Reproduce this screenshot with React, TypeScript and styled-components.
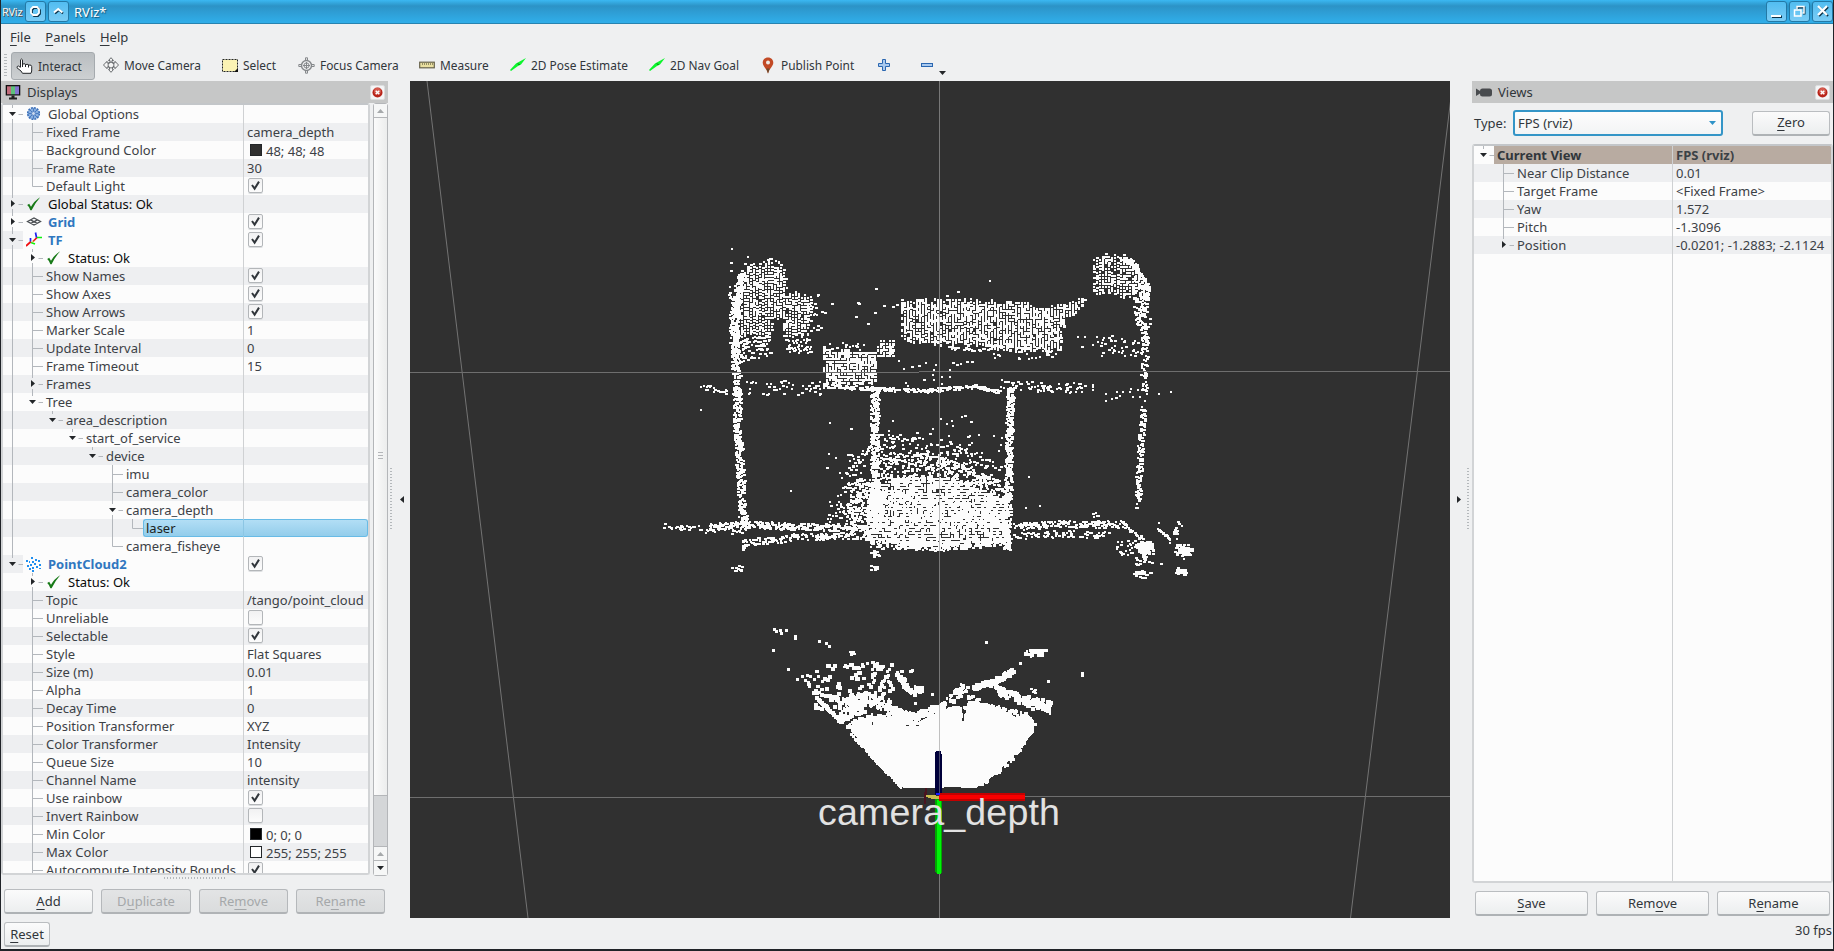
import React from "react";
import styled, { createGlobalStyle, css } from "styled-components";

const Global = createGlobalStyle`
  html, body { margin: 0; padding: 0; overflow: hidden; background: #202328; }
  body { font-family: "Noto Sans", sans-serif; font-size: 13px; color: #31363b; }
  * { box-sizing: border-box; }
  svg { display: block; flex: none; }
`;

/* ---------- window frame ---------- */
const Window = styled.div`
  width: 1834px;
  height: 951px;
  display: flex;
  flex-direction: column;
  padding: 0 1px 2px 1px;
  background: #202328;
`;
const TitleBar = styled.header`
  height: 24px;
  flex: none;
  display: flex;
  align-items: center;
  gap: 2px;
  padding: 0 0 1px 1px;
  background: linear-gradient(#3bb8f2 0, #2c93c6 6px, #2e9dd4 12px, #30ade8 22px);
  border-bottom: 1px solid #2783b0;
  color: #fff;
  text-shadow: 1px 1px 1px #145274;
`;
const AppIcon = styled.span`
  width: 21px;
  font: 400 11px "Noto Sans", sans-serif;
  letter-spacing: -0.3px;
  color: #f2f2f2;
  text-shadow: 1px 1px 0 #555;
`;
const TitleButton = styled.span`
  width: 21px;
  height: 21px;
  display: flex;
  align-items: center;
  justify-content: center;
  border: 1px solid #2379a6;
  border-radius: 3px;
  background: linear-gradient(#52bdf1, #7accf5);
`;
const TitleText = styled.span`
  flex: 1;
  padding: 1px 0 0 3px;
  line-height: 22px;
`;
const Body = styled.div`
  flex: 1;
  min-height: 0;
  display: flex;
  flex-direction: column;
  background: #eff0f1;
`;
const MenuBar = styled.nav`
  height: 27px;
  flex: none;
  display: flex;
  gap: 14.5px;
  padding: 4px 9px 0;
  line-height: 18px;
`;
const ToolBar = styled.div`
  height: 30px;
  flex: none;
  display: flex;
  align-items: center;
  padding: 0 0 2px 3px;
  font-size: 11.9px;
`;
const Grip = styled.i<{ $w: number; $h: number; $row?: boolean }>`
  width: ${(p) => p.$w}px;
  height: ${(p) => p.$h}px;
  flex: none;
  background: ${(p) =>
    p.$row
      ? "repeating-linear-gradient(90deg, #b4b8bb 0 1px, transparent 1px 3px)"
      : "repeating-linear-gradient(#b4b8bb 0 1px, transparent 1px 3px)"};
`;
const Tool = styled.button<{ $w: number; $active?: boolean }>`
  width: ${(p) => p.$w}px;
  height: 28px;
  display: flex;
  align-items: center;
  gap: 5px;
  padding: 0 5px;
  border: 1px solid transparent;
  border-radius: 3px;
  background: none;
  font: inherit;
  color: inherit;
  white-space: nowrap;
  ${(p) =>
    p.$active &&
    css`
      margin: 1px 2px 0 4px;
      padding: 1px 4px 0;
      border-color: #a5aaae;
      background: linear-gradient(#b9bdc0, #cdd0d2);
    `}
`;
const Workspace = styled.main`
  flex: 1;
  min-height: 0;
  display: flex;
`;
const LeftDock = styled.section`
  width: 387px;
  display: flex;
  flex-direction: column;
`;
const RightDock = styled.section`
  width: 361px;
  display: flex;
  flex-direction: column;
`;
const DockTitle = styled.div`
  height: 22px;
  flex: none;
  display: flex;
  align-items: center;
  gap: 6px;
  padding: 0 3px 0 4px;
  background: #c6c7c7;
  line-height: 22px;
`;
const DockName = styled.span`
  flex: 1;
`;
const CloseBox = styled.span`
  width: 15px;
  height: 15px;
  display: flex;
  align-items: center;
  justify-content: center;
  border-radius: 2px;
  background: #f4f5f6;
  border: 1px solid #dcdedf;
`;
const Splitter = styled.div<{ $flip?: boolean }>`
  width: 22px;
  flex: none;
  display: flex;
  flex-direction: ${(p) => (p.$flip ? "row-reverse" : "row")};
  align-items: center;
  gap: ${(p) => (p.$flip ? "6px" : "8px")};
  padding: 0 ${(p) => (p.$flip ? "3px" : "2px")} 2px;
  justify-content: flex-start;
`;
const Viewport = styled.div`
  width: 1040px;
  height: 837px;
  flex: none;
  background: #303030;
`;

/* ---------- property tree ---------- */
const TreeArea = styled.div`
  height: 773px;
  flex: none;
  display: flex;
  gap: 3px;
`;
const TreeFrame = styled.div<{ $w: number; $h: number; $col: number }>`
  width: ${(p) => p.$w}px;
  height: ${(p) => p.$h}px;
  flex: none;
  overflow: hidden;
  border: 2px solid #d2d4d6;
  border-top: 2px solid #c3c6c9;
  border-radius: 3px;
  background: linear-gradient(#cfd1d3, #cfd1d3) ${(p) => p.$col}px 0 / 1px 100% no-repeat #fcfcfc;
`;
const TreeRow = styled.div<{ $bg: string }>`
  height: 18px;
  display: flex;
  background: ${(p) => p.$bg};
`;
const Name = styled.div<{ $w: number; $bg?: string; $tone?: string; $bold?: boolean; $picked?: boolean }>`
  width: ${(p) => p.$w}px;
  flex: none;
  display: flex;
  align-items: center;
  gap: 6px;
  padding-left: 3px;
  line-height: 18px;
  white-space: nowrap;
  border-right: 1px solid #cfd1d3;
  color: ${(p) => p.$tone ?? "#3c4146"};
  font-weight: ${(p) => (p.$bold ? 700 : 400)};
  background: ${(p) => p.$bg ?? "none"};
  ${(p) =>
    p.$picked &&
    css`
      padding-left: 2px;
      border: 1px solid #68bbe6;
      border-right: 1px solid #8cc6e4;
      border-radius: 3px 0 0 3px;
      background: linear-gradient(#b2def5, #93cdeb);
      color: #1b1e20;
      line-height: 16px;
    `}
`;
const Value = styled.div<{ $bg?: string; $bold?: boolean; $picked?: boolean }>`
  flex: 1;
  display: flex;
  align-items: center;
  gap: 4px;
  padding-left: 3px;
  line-height: 18px;
  white-space: nowrap;
  color: #3c4146;
  font-weight: ${(p) => (p.$bold ? 700 : 400)};
  background: ${(p) => p.$bg ?? "none"};
  ${(p) =>
    p.$picked &&
    css`
      border: 1px solid #68bbe6;
      border-left: 0;
      border-radius: 0 3px 3px 0;
      background: linear-gradient(#b2def5, #93cdeb);
    `}
`;
const Check = styled.span`
  width: 15px;
  height: 15px;
  margin: 0 0 1px 1px;
  display: flex;
  align-items: center;
  justify-content: center;
  border: 1px solid #b3b6b9;
  border-radius: 2px;
  background: linear-gradient(#f1f1f2, #fcfcfc);
  box-shadow: 0 1px 0 #dcdee0;
`;
const Swatch = styled.span<{ $c: string }>`
  width: 12px;
  height: 12px;
  margin-left: 3px;
  border: 1px solid #232629;
  background: ${(p) => p.$c};
`;
const SwatchText = styled.span`
  padding-top: 1px;
`;
const ScrollBar = styled.div`
  width: 15px;
  display: flex;
  flex-direction: column;
  border: 1px solid #b4b6b9;
  border-radius: 3px;
  background: #d4d6d8;
`;
const ScrollButton = styled.span`
  height: 14px;
  display: flex;
  align-items: center;
  justify-content: center;
  background: #f6f7f7;
  border-bottom: 1px solid #b4b6b9;
  &:last-child { border-bottom: 0; }
`;
const Thumb = styled.span`
  height: 678px;
  display: flex;
  align-items: center;
  justify-content: center;
  background: linear-gradient(90deg, #fbfbfb, #eceded);
  border-bottom: 1px solid #b4b6b9;
  padding-bottom: 2px;
`;
const Groove = styled.span`
  flex: 1;
  border-bottom: 1px solid #b4b6b9;
`;

/* ---------- buttons ---------- */
const ButtonRow = styled.div`
  display: flex;
  flex: none;
  gap: 8px;
  padding: 8px 0 0 3px;
`;
const PushButton = styled.button<{ $w: number; $off?: boolean }>`
  width: ${(p) => p.$w}px;
  height: 25px;
  flex: none;
  padding: 0 0 1px;
  border: 1px solid ${(p) => (p.$off ? "#b5b8bb" : "#babdc0")};
  border-bottom: 2px solid ${(p) => (p.$off ? "#b0b3b6" : "#aeb2b5")};
  border-radius: 3px;
  background: ${(p) => (p.$off ? "linear-gradient(#e3e4e5, #dadcdd)" : "linear-gradient(#fbfbfb, #eceeef)")};
  font: 13px "Noto Sans", sans-serif;
  line-height: 20px;
  color: ${(p) => (p.$off ? "#a5a8aa" : "#31363b")};
`;
const SplitHandle = styled.div`
  height: 5px;
  display: flex;
  justify-content: center;
  padding-top: 1px;
`;
const StatusBar = styled.footer`
  height: 31px;
  flex: none;
  display: flex;
  justify-content: space-between;
  padding: 4px 1px 0 3px;
`;
const Fps = styled.span`
  line-height: 16px;
`;
const TypeRow = styled.div`
  height: 41px;
  flex: none;
  display: flex;
  align-items: center;
  padding: 0 3px 1px 2px;
`;
const TypeLabel = styled.span`
  width: 39px;
`;
const Combo = styled.div`
  width: 210px;
  height: 26px;
  margin-right: 29px;
  display: flex;
  align-items: center;
  justify-content: space-between;
  padding: 0 5px 0 3px;
  border: 2px solid #3495c7;
  border-radius: 3px;
  background: linear-gradient(#fdfdfd, #f3f4f5);
`;

/* Text with its keyboard mnemonic marked by "&" */
const Mnemonic = styled.u`
  text-underline-offset: 3px;
  text-decoration-thickness: 1px;
`;
function Label({ text }: { text: string }) {
  const at = text.indexOf("&");
  if (at < 0) return <span>{text}</span>;
  return (
    <span>
      {text.slice(0, at)}
      <Mnemonic>{text[at + 1]}</Mnemonic>
      {text.slice(at + 2)}
    </span>
  );
}

const Triangle = ({ dir, c = "#232629", s = 7 }: { dir: "up" | "down" | "left" | "right"; c?: string; s?: number }) => {
  const h = 4;
  const d = {
    up: `M0 ${h}L${s / 2} 0L${s} ${h}Z`,
    down: `M0 0H${s}L${s / 2} ${h}Z`,
    left: `M${h} 0V${s}L0 ${s / 2}Z`,
    right: `M0 0L${h} ${s / 2}L0 ${s}Z`,
  }[dir];
  const flat = dir === "up" || dir === "down";
  return (
    <svg width={flat ? s : h} height={flat ? h : s}>
      <path d={d} fill={c} />
    </svg>
  );
};
const SplitArrow = styled.span`
  padding-top: 2px;
`;

const CloseGlyph = () => (
  <svg width="11" height="11" viewBox="0 0 11 11">
    <circle cx="5.5" cy="5.5" r="5" fill="#b8241a" />
    <circle cx="5.5" cy="4.2" r="3.4" fill="#e4786a" opacity=".65" />
    <path d="M3.7 3.7L7.3 7.3M7.3 3.7L3.7 7.3" stroke="#fff" strokeWidth="1.4" />
  </svg>
);

/* ---------- tree icons ---------- */
const icons: Record<string, React.ReactNode> = {
  gear: (
    <svg width="16" height="16" viewBox="0 0 16 16">
      <circle cx="7.5" cy="7.5" r="5.8" fill="#87aee0" stroke="#3b6fb8" strokeWidth="1.6" strokeDasharray="2 1" />
      <g stroke="#3b6fb8" strokeWidth=".8">
        <path d="M7.5 2.5V12.5M2.5 7.5H12.5M4 4L11 11M11 4L4 11" />
      </g>
      <circle cx="7.5" cy="7.5" r="1.9" fill="#cfdcf0" stroke="#4a79bd" strokeWidth=".8" />
    </svg>
  ),
  ok: (
    <svg width="16" height="16" viewBox="0 0 16 16">
      <path d="M1.2 9L3.2 7.8L5 10.8Q8 5 14.2 1.2Q9 7 5.6 14.2H4.4Q3.5 11 1.2 9Z" fill="#187a18" />
    </svg>
  ),
  grid: (
    <svg width="16" height="16" viewBox="0 0 16 16">
      <path d="M1.5 7.5L8 4L14.5 7.5L8 11ZM4.5 5.8L11.2 9.3M11.5 5.8L4.8 9.3" fill="none" stroke="#4b4f53" strokeWidth="1.3" />
    </svg>
  ),
  tf: (
    <svg width="16" height="16" viewBox="0 0 16 16" fill="none">
      <path d="M0 14L5 9.5M7 9.5L11 5.5" stroke="#f01010" strokeWidth="1.7" />
      <path d="M9.5 .5L10.5 5.5M4.5 6V9.5" stroke="#2020f0" strokeWidth="1.7" />
      <path d="M11 5.5H16M5 10.5L9 12" stroke="#10f010" strokeWidth="1.7" />
      <path d="M6 10.5L8 8.5" stroke="#d8b020" strokeWidth="1" />
    </svg>
  ),
  cloud: (
    <svg width="16" height="16" viewBox="0 0 16 16" fill="#1f8ff0">
      <path d="M5 1h2v2h-2zM9 3h2v2h-2zM0 4h2v2h-2zM12 4h2v2h-2zM6 5h2v2h-2zM3 5h1v2h-1zM8 7h2v2h-2zM13 8h2v2h-2zM4 8h2v2h-2zM1 9h2v2h-2zM10 10h2v2h-2zM6 11h2v2h-2zM3 12h2v2h-2zM13 12h2v1h-2zM6 14h2v2h-2z" />
    </svg>
  ),
};

type Row = {
  level: number;
  label: string;
  value?: string;
  checked?: boolean;
  swatch?: string;
  icon?: string;
  open?: boolean;
  kind?: "display" | "status" | "view" | "picked";
};
const r = (level: number, label: string, value?: string, extra: Partial<Row> = {}): Row => ({ level, label, value, ...extra });

const displayRows: Row[] = [
  r(0, "Global Options", "", { icon: "gear", open: true }),
  r(1, "Fixed Frame", "camera_depth"),
  r(1, "Background Color", "48; 48; 48", { swatch: "#303030" }),
  r(1, "Frame Rate", "30"),
  r(1, "Default Light", "", { checked: true }),
  r(0, "Global Status: Ok", "", { icon: "ok", open: false, kind: "status" }),
  r(0, "Grid", "", { icon: "grid", open: false, checked: true, kind: "display" }),
  r(0, "TF", "", { icon: "tf", open: true, checked: true, kind: "display" }),
  r(1, "Status: Ok", "", { icon: "ok", open: false, kind: "status" }),
  r(1, "Show Names", "", { checked: true }),
  r(1, "Show Axes", "", { checked: true }),
  r(1, "Show Arrows", "", { checked: true }),
  r(1, "Marker Scale", "1"),
  r(1, "Update Interval", "0"),
  r(1, "Frame Timeout", "15"),
  r(1, "Frames", "", { open: false }),
  r(1, "Tree", "", { open: true }),
  r(2, "area_description", "", { open: true }),
  r(3, "start_of_service", "", { open: true }),
  r(4, "device", "", { open: true }),
  r(5, "imu"),
  r(5, "camera_color"),
  r(5, "camera_depth", "", { open: true }),
  r(6, "laser", "", { kind: "picked" }),
  r(5, "camera_fisheye"),
  r(0, "PointCloud2", "", { icon: "cloud", open: true, checked: true, kind: "display" }),
  r(1, "Status: Ok", "", { icon: "ok", open: false, kind: "status" }),
  r(1, "Topic", "/tango/point_cloud"),
  r(1, "Unreliable", "", { checked: false }),
  r(1, "Selectable", "", { checked: true }),
  r(1, "Style", "Flat Squares"),
  r(1, "Size (m)", "0.01"),
  r(1, "Alpha", "1"),
  r(1, "Decay Time", "0"),
  r(1, "Position Transformer", "XYZ"),
  r(1, "Color Transformer", "Intensity"),
  r(1, "Queue Size", "10"),
  r(1, "Channel Name", "intensity"),
  r(1, "Use rainbow", "", { checked: true }),
  r(1, "Invert Rainbow", "", { checked: false }),
  r(1, "Min Color", "0; 0; 0", { swatch: "#000" }),
  r(1, "Max Color", "255; 255; 255", { swatch: "#fff" }),
  r(1, "Autocompute Intensity Bounds", "", { checked: true }),
];
const viewRows: Row[] = [
  r(0, "Current View", "FPS (rviz)", { open: true, kind: "view" }),
  r(1, "Near Clip Distance", "0.01"),
  r(1, "Target Frame", "<Fixed Frame>"),
  r(1, "Yaw", "1.572"),
  r(1, "Pitch", "-1.3096"),
  r(1, "Position", "-0.0201; -1.2883; -2.1124", { open: false }),
];

const continues = (rows: Row[], i: number, level: number) => {
  for (let j = i + 1; j < rows.length; j++) {
    if (rows[j].level === level) return true;
    if (rows[j].level < level) return false;
  }
  return false;
};

function Branch({ rows, i }: { rows: Row[]; i: number }) {
  const { level, open } = rows[i];
  const x = 9.5 + 20 * level;
  const more = continues(rows, i, level) || (i === rows.length - 1 && rows.length > 20);
  let d = "";
  for (let k = 0; k < level; k++) if (continues(rows, i, k)) d += `M${9.5 + 20 * k} 0V18`;
  if (open === undefined) d += `M${x} 0V${more ? 18 : 9.5}M${x} 9.5H${x + 10.5}`;
  else d += `M${x} 0V3${more ? `M${x} 14V18` : ""}M${x + 6} 9.5H${x + 10.5}`;
  return (
    <svg width={20 * (level + 1)} height="18">
      <path d={d} stroke="#b3b7bc" fill="none" />
      {open === true && <path d={`M${x - 3.5} 7H${x + 3.5}L${x} 11Z`} fill="#232629" />}
      {open === false && <path d={`M${x - 1.5} 5V12L${x + 2.5} 8.5Z`} fill="#232629" />}
    </svg>
  );
}

function Tree({ rows, column }: { rows: Row[]; column: number }) {
  return (
    <>
      {rows.map((row, i) => {
        const picked = row.kind === "picked";
        const whiteRow = row.kind === "display" || (row.kind === "status" && row.level === 1);
        const cell = row.kind === "view" ? "#b8aba1" : whiteRow ? "#fcfcfc" : undefined;
        const tone = { display: "#3077c0", status: "#0a0a0a", view: "#31363b", picked: undefined }[row.kind ?? "picked"];
        const bold = row.kind === "display" || row.kind === "view";
        const striped = i % 2 === 1 && row.kind !== "view";
        return (
          <TreeRow key={i} $bg={striped ? "#eeeff1" : "#fcfcfc"}>
            <Branch rows={rows} i={i} />
            <Name $w={column + 1 - 20 * (row.level + 1)} $bg={cell} $tone={tone} $bold={bold} $picked={picked}>
              {row.icon && icons[row.icon]}
              {row.label}
            </Name>
            <Value $bg={cell} $bold={bold} $picked={picked}>
              {row.swatch && <Swatch $c={row.swatch} />}
              {row.checked !== undefined && (
                <Check>
                  {row.checked && (
                    <svg width="11" height="11" viewBox="0 0 11 11">
                      <path d="M2 5L4.6 8.6L9 1.6" fill="none" stroke="#31363b" strokeWidth="2" />
                    </svg>
                  )}
                </Check>
              )}
              {row.swatch ? <SwatchText>{row.value}</SwatchText> : row.value}
            </Value>
          </TreeRow>
        );
      })}
    </>
  );
}

/* ---------- point cloud ---------- */
type P = [number, number];
function buildCloud(): string {
  let seed = 20177;
  const rnd = () => {
    seed = (seed * 1664525 + 1013904223) >>> 0;
    return seed / 4294967296;
  };
  const out: string[] = [];
  const dot = (x: number, y: number, w = 2, h = 2) =>
    out.push(`M${Math.round(x)} ${Math.round(y)}h${w}v${h}h-${w}z`);
  const inside = (x: number, y: number, poly: P[]) => {
    let hit = false;
    for (let i = 0, j = poly.length - 1; i < poly.length; j = i++) {
      const [ax, ay] = poly[i];
      const [bx, by] = poly[j];
      if (ay > y !== by > y && x < ((bx - ax) * (y - ay)) / (by - ay) + ax) hit = !hit;
    }
    return hit;
  };
  /* Regular lattice of squares; joinX and joinY close the gaps between neighbours. */
  const fill = (poly: P[], density: number, joinX: number, joinY: number, shuffle = 3) => {
    const xs = poly.map((p) => p[0]);
    const ys = poly.map((p) => p[1]);
    for (let x = Math.min(...xs) - 2; x < Math.max(...xs); x += 3) {
      const off = Math.floor(rnd() * shuffle);
      for (let y = Math.min(...ys) - off - 2; y < Math.max(...ys); y += 3) {
        if (inside(x + (rnd() - 0.5) * 4, y + (rnd() - 0.5) * 5, poly) && rnd() < density)
          dot(x, y, rnd() < joinX ? 3 : 2, rnd() < joinY ? 3 : 2);
      }
    }
  };
  const band = (pts: P[], thick: number, perPx: number, w = 3, h = 2) => {
    for (let i = 1; i < pts.length; i++) {
      const [ax, ay] = pts[i - 1];
      const [bx, by] = pts[i];
      const len = Math.hypot(bx - ax, by - ay);
      const n = len * perPx;
      for (let k = 0; k < n; k++) {
        const t = rnd();
        const o = (rnd() - 0.5) * thick;
        dot(ax + (bx - ax) * t + (o * Math.abs(by - ay)) / len, ay + (by - ay) * t + (o * Math.abs(bx - ax)) / len,
          rnd() < 0.5 ? w : 2, h);
      }
    }
  };
  const scatter = (x: number, y: number, w: number, h: number, n: number, s = 2) => {
    for (let k = 0; k < n; k++) dot(x + rnd() * w, y + rnd() * h, rnd() < 0.3 ? s + 1 : s, s);
  };
  const blob = (x: number, y: number, rx: number, ry: number, n: number) => {
    for (let k = 0; k < n; k++) {
      const a = rnd() * 6.283;
      const q = rnd();
      dot(x + Math.cos(a) * q * rx, y + Math.sin(a) * q * ry, 3, 2);
    }
  };

  // upper left shelf block
  fill([[742, 264], [783, 263], [786, 292], [811, 294], [813, 302], [807, 334], [784, 338], [782, 318], [772, 318], [773, 332], [740, 338], [734, 300]], 0.96, 0.4, 0.25, 2);
  band([[742, 272], [735, 305], [734, 330], [735, 368]], 8, 3.4);
  band([[732, 284], [730, 300], [733, 350]], 7, 0.5);
  for (const y of [262, 270]) dot(730, y, 3, 2);
  scatter(743, 256, 40, 8, 12);
  for (let k = 0; k < 6; k++) band([[738, 342 + k * 4], [750, 337 + k * 4], [770, 336 + k * 4]], 2, 0.55 - k * 0.06);
  scatter(784, 338, 28, 14, 42);
  scatter(806, 292, 12, 46, 14);
  band([[736, 368], [737, 430], [743, 525]], 8, 2.1);
  dot(731, 248);
  // middle boxes
  fill([[822, 348], [874, 349], [877, 382], [825, 383]], 0.99, 0.65, 0.55, 1);
  fill([[876, 339], [894, 339], [895, 357], [876, 357]], 0.98, 0.5, 0.5, 1);
  scatter(820, 342, 60, 6, 12);
  fill([[900, 300], [968, 298], [1012, 301], [1040, 307], [1064, 302], [1084, 295], [1086, 302], [1062, 320], [1059, 350], [1017, 352], [990, 347], [945, 342], [900, 341]], 0.98, 0.35, 0.62, 2);
  band([[948, 347], [980, 350], [1000, 344]], 3, 0.6);
  scatter(992, 345, 70, 13, 26);
  for (const [x, y] of [[875, 288], [857, 302], [858, 303], [831, 303], [855, 316], [867, 323], [874, 312], [883, 305], [892, 306], [821, 311], [824, 312], [817, 325], [820, 327], [946, 295], [957, 291], [896, 304]]) dot(x, y, 3, 2);
  // upper right post
  fill([[1093, 254], [1125, 253], [1136, 262], [1142, 275], [1132, 297], [1110, 293], [1092, 292]], 0.9, 0.35, 0.25, 2);
  band([[1118, 256], [1132, 262], [1143, 280], [1147, 300]], 8, 1.8);
  band([[1138, 276], [1140, 300], [1142, 325]], 15, 2.4);
  band([[1144, 325], [1143, 400]], 7, 1.1);
  band([[1143, 405], [1139, 460], [1137, 508]], 6, 1.3);
  scatter(1100, 335, 42, 20, 42);
  scatter(1075, 332, 30, 16, 7);
  // centre rail
  band([[700, 386], [727, 391]], 6, 0.7);
  scatter(735, 380, 85, 14, 50);
  band([[820, 385], [870, 388], [925, 390], [975, 386], [1000, 391]], 4, 1.3);
  scatter(895, 360, 80, 28, 24);
  band([[1000, 384], [1040, 386], [1095, 388]], 10, 0.7);
  scatter(1095, 388, 45, 12, 12);
  dot(1158, 393); dot(1170, 391); dot(700, 409);
  // legs
  band([[874, 390], [874, 470], [875, 530]], 8, 3);
  band([[1010, 386], [1008, 450], [1006, 550]], 7, 2.6);
  // floor cluster
  fill([[866, 494], [880, 480], [905, 474], [950, 476], [1000, 496], [1007, 505], [1007, 541], [960, 547], [905, 548], [866, 538]], 0.99, 0.85, 0.6, 1);
  band([[866, 505], [1004, 512]], 30, 4);
  band([[880, 465], [940, 466], [1003, 492]], 28, 3);
  band([[880, 449], [945, 452], [1000, 474]], 28, 1.1);
  scatter(858, 433, 145, 35, 60);
  scatter(882, 415, 90, 25, 16);
  band([[866, 478], [860, 500], [856, 526]], 22, 3.2);
  band([[856, 474], [850, 500], [842, 526]], 30, 1.3);
  band([[862, 444], [852, 474]], 16, 1);
  scatter(826, 500, 30, 25, 22);
  scatter(818, 415, 42, 90, 12);
  // lower rail
  band([[662, 525], [712, 528]], 6, 0.5);
  band([[710, 526], [750, 524], [800, 526], [870, 528]], 7, 1.9);
  band([[742, 542], [770, 540], [800, 536], [870, 535]], 7, 1.2);
  scatter(705, 522, 40, 12, 28);
  band([[870, 543], [940, 546], [1003, 540]], 9, 1.8);
  band([[1012, 526], [1060, 523], [1122, 524]], 7, 1.4);
  band([[1012, 536], [1060, 533], [1108, 534]], 7, 0.7);
  blob(874, 553, 5, 4, 12); blob(874, 567, 5, 3, 14);
  blob(742, 545, 3, 9, 12); blob(737, 568, 6, 3, 12);
  band([[1120, 522], [1136, 534], [1136, 548]], 12, 1.4);
  scatter(1115, 540, 18, 14, 18);
  blob(1145, 548, 9, 8, 100); blob(1182, 549, 9, 7, 80); blob(1180, 571, 6, 5, 28);
  blob(1142, 573, 9, 4, 26); blob(1142, 560, 8, 8, 14);
  band([[1156, 528], [1168, 537]], 7, 1.8); blob(1174, 531, 3, 5, 12);
  scatter(1150, 520, 35, 55, 12);
  scatter(1092, 511, 7, 14, 10);
  dot(1028, 476); dot(1025, 507); dot(1039, 505); dot(989, 280); dot(790, 490);

  // near field: larger squares
  ([[773, 628], [775, 630], [779, 629], [780, 632], [785, 629], [794, 635], [794, 637], [772, 649], [818, 640], [825, 642], [828, 645], [787, 668], [796, 678], [801, 675], [985, 641], [1081, 672], [1081, 674], [1047, 680], [1019, 662], [931, 693], [914, 702]] as P[]).forEach(([x, y]) => dot(x, y, 3, 3));
  blob(850, 653, 3, 3, 8);
  blob(846, 665, 4, 3, 8);
  scatter(803, 668, 20, 25, 14, 3);
  scatter(822, 662, 36, 38, 24, 4);
  scatter(857, 659, 32, 34, 36, 3);
  scatter(863, 660, 28, 34, 16, 4);
  scatter(885, 666, 34, 6, 5, 3);
  band([[896, 672], [908, 690]], 12, 2.2, 4, 4);
  band([[913, 687], [921, 687]], 6, 2, 4, 4);
  band([[817, 698], [838, 718]], 9, 1.6, 4, 4);
  scatter(812, 688, 26, 20, 14, 4);
  band([[836, 705], [862, 696], [890, 704]], 14, 2.2, 4, 4);
  band([[835, 716], [863, 706]], 10, 2.6, 4, 4);
  band([[890, 707], [913, 715], [945, 703]], 6, 2.2, 4, 4);
  band([[948, 700], [965, 684]], 9, 1.6, 4, 3);
  band([[972, 685], [990, 681], [1012, 669]], 5, 2, 4, 4);
  band([[1024, 652], [1044, 651]], 6, 1.8, 4, 3);
  band([[994, 688], [1015, 696], [1038, 702], [1048, 708]], 10, 2, 4, 4);
  scatter(1026, 698, 23, 10, 14, 4);
  blob(1033, 690, 4, 5, 6);
  scatter(966, 694, 14, 5, 7, 3);
  band([[846, 727], [862, 717], [890, 715], [915, 716]], 6, 1.4, 4, 3);
  band([[968, 702], [1000, 708], [1026, 715], [1032, 724]], 6, 1.2, 4, 3);
  band([[848, 731], [875, 760], [900, 786]], 3, 0.7, 3, 3);
  band([[1032, 728], [1012, 757], [980, 784]], 3, 0.7, 3, 3);
  scatter(946, 705, 18, 10, 16, 4);
  return out.join("");
}
const cloud = buildCloud();

const Scene = () => (
  <svg width="1040" height="837" viewBox="410 81 1040 837">
    <path d="M427 81L528 918M1453 81L1350.5 918" stroke="#737373" fill="none" />
    <g shapeRendering="crispEdges">
      <path d={cloud} fill="#fcfcfc" />
      <path
        d="M850 727L856 721L872 716L900 717L918 722L932 715L948 708L962 707V721H964L968 701L982 703L1002 709L1016 717L1026 713L1034 721V732L1026 741L1018 752L1008 761L992 777L976 788H961V787H944V788H904L892 779L878 764L866 751L857 742V737L852 733Z"
        fill="#fcfcfc"
      />
      <path d="M906 725h3v1h-3zM916 725h3v1h-3zM872 722h1v3h-1zM1019 710h1v6h-1zM963 709h1v12h-1z" fill="#303030" />
      <path d="M410 372.5H919M919 371.5H1450M410 797.5H925M1025 796.5H1450" stroke="#6e6e6e" />
      <path d="M939.5 81V918" stroke="#a0a0a0" strokeOpacity=".65" />
      <path d="M936 751h5l1 5v39h-7v-43z" fill="#00003a" />
      <path d="M939 751h1v44h-1z" fill="#4a4a6a" />
      <path d="M935 799h7v73l-2 2h-3l-2-2z" fill="#00a800" />
      <path d="M937 800h4v74h-4z" fill="#00f208" />
      <path d="M939 793h86v8h-86z" fill="#c40000" />
      <path d="M939 795h86v4h-86z" fill="#f80000" />
      <path d="M936 793h4v2h-4z" fill="#1a1aff" />
      <path d="M926 795h6l7 1v3h-7l-6-2z" fill="#c9bd4e" />
      <path d="M926 788V795L925 804L924 797Z" fill="#4a1420" stroke="#4a1420" />
    </g>
    <text x="818" y="825" textLength="242" fontFamily="Liberation Sans, sans-serif" fontSize="37.6" fill="#e2e2e2">
      camera_depth
    </text>
  </svg>
);

/* ---------- toolbar icons ---------- */
const HandIcon = () => (
  <svg width="17" height="16" viewBox="0 0 17 16">
    <path
      d="M4.5 9V1.8Q5.5 .2 6.5 1.8V6L9 5.8L9.5 6.5L12 6.3L12.5 7L15 7.2L15.7 8.5V13L15 15.3H6.5L5 13L1 9.8Q.8 8 2.5 8L4.5 9.5"
      fill="#fff" stroke="#232629" strokeLinejoin="round" />
    <path d="M9.5 6.5V9M12.5 7V9.5M6.5 6V9" stroke="#232629" />
  </svg>
);
const MoveIcon = () => (
  <svg width="16" height="16" viewBox="0 0 16 16" fill="#f4f4f4" stroke="#6a6d70">
    <path d="M8 .7L10.5 3.5H9V6H12V4.3L15.5 8L12 11.7V10H9.5V12.5H10.5L8 15.3L5.5 12.5H6.5V10H4V11.7L.5 8L4 4.3V6H7V3.5H5.5Z" />
    <circle cx="8" cy="8" r="3" fill="none" />
  </svg>
);
const SelectIcon = () => (
  <svg width="16" height="16" viewBox="0 0 16 16">
    <rect x=".5" y="2.5" width="15" height="12" fill="#fbf3b4" stroke="#232629" strokeDasharray="2 1" />
    <path d="M16 11V15H12Z" fill="#111" />
  </svg>
);
const FocusIcon = () => (
  <svg width="17" height="17" viewBox="0 0 17 17" fill="none" stroke="#85888b">
    <circle cx="8.5" cy="8.5" r="5" strokeWidth="1.4" />
    <circle cx="8.5" cy="8.5" r="2.6" />
    <path d="M8.5 5V12M5 8.5H12" />
    <path d="M7.5 3.5V.8H9.5V3.5M7.5 13.5V16.2H9.5V13.5M3.5 7.5H.8V9.5H3.5M13.5 7.5H16.2V9.5H13.5" />
  </svg>
);
const MeasureIcon = () => (
  <svg width="16" height="16" viewBox="0 0 16 16">
    <rect x=".7" y="5.2" width="14.6" height="5.6" fill="#e9dfa0" stroke="#66624c" strokeWidth="1.2" />
    <path d="M3.5 5.5V8M5.5 5.5V8M7.5 5.5V8M9.5 5.5V8M11.5 5.5V8M13.5 5.5V8" stroke="#8a845e" strokeWidth=".9" />
  </svg>
);
const PoseIcon = () => (
  <svg width="16" height="16" viewBox="0 0 16 16">
    <path d="M0 13L6 6.5L16 1L11 7.5L8 9L1 14Z" fill="#0cf62c" />
    <path d="M8 6.5L9.5 8" stroke="#0a5010" />
  </svg>
);
const PinIcon = () => (
  <svg width="16" height="17" viewBox="0 0 16 17">
    <path d="M8 .5C4.6 .5 2.7 3 2.7 5.8C2.7 9 6.5 11.5 8 16.5C9.5 11.5 13.3 9 13.3 5.8C13.3 3 11.4 .5 8 .5Z" fill="#c24a26" />
    <path d="M6.3 11.5L8 16.5L9.7 11.5Z" fill="#6b4a2c" />
    <circle cx="8" cy="5.5" r="2" fill="#f0ebe6" />
  </svg>
);

export default function App() {
  return (
    <Window>
      <Global />
      <TitleBar>
        <AppIcon>RViz</AppIcon>
        <TitleButton>
          <svg width="11" height="11" viewBox="0 0 11 11" fill="none">
            <path d="M4 2H8L10 4V8L8 10H4L2 8V4Z" stroke="#0d3248" strokeWidth="1.8" />
            <path d="M3 1H7L9 3V7L7 9H3L1 7V3Z" stroke="#fff" strokeWidth="1.8" />
          </svg>
        </TitleButton>
        <TitleButton>
          <svg width="11" height="9" viewBox="0 0 11 9" fill="none">
            <path d="M2 6.5L6 3L10 6.5" stroke="#0d3248" strokeWidth="2" />
            <path d="M1 5.5L5.2 2L9.4 5.5" stroke="#fff" strokeWidth="2" />
          </svg>
        </TitleButton>
        <TitleText>RViz*</TitleText>
        <TitleButton>
          <svg width="13" height="13">
            <path d="M2 10.5H12V13H2Z" fill="#0d3248" />
            <path d="M1 10H11V12H1Z" fill="#fff" />
          </svg>
        </TitleButton>
        <TitleButton>
          <svg width="13" height="13" fill="none">
            <path d="M4.5 4V2.5H11.5V8.5H10" stroke="#0d3248" strokeWidth="2" />
            <path d="M4 4V1.5H11V8H9.5M1.5 5H8V11H1.5Z" stroke="#fff" strokeWidth="1.5" />
          </svg>
        </TitleButton>
        <TitleButton>
          <svg width="12" height="12" fill="none">
            <path d="M2 2L11 11M11 2L2 11" stroke="#0d3248" strokeWidth="2.2" />
            <path d="M1 1L10 10M10 1L1 10" stroke="#fff" strokeWidth="2.2" />
          </svg>
        </TitleButton>
      </TitleBar>
      <Body>
        <MenuBar>
          <Label text="&File" />
          <Label text="&Panels" />
          <Label text="&Help" />
        </MenuBar>
        <ToolBar>
          <Grip $w={3} $h={22} />
          <Tool $w={84} $active><HandIcon />Interact</Tool>
          <Tool $w={119}><MoveIcon />Move Camera</Tool>
          <Tool $w={76}><SelectIcon />Select</Tool>
          <Tool $w={121}><FocusIcon />Focus Camera</Tool>
          <Tool $w={91}><MeasureIcon />Measure</Tool>
          <Tool $w={139}><PoseIcon />2D Pose Estimate</Tool>
          <Tool $w={111}><PoseIcon />2D Nav Goal</Tool>
          <Tool $w={118}><PinIcon />Publish Point</Tool>
          <Tool $w={43}>
            <svg width="12" height="12" viewBox="0 0 12 12">
              <path d="M4.5 .5H7.5V4.5H11.5V7.5H7.5V11.5H4.5V7.5H.5V4.5H4.5Z" fill="#a9c9ee" stroke="#2a66b0" />
            </svg>
          </Tool>
          <Tool $w={40}>
            <svg width="27" height="20" viewBox="0 0 27 20">
              <rect x=".5" y="8.5" width="11" height="3" fill="#a9c9ee" stroke="#2a66b0" />
              <path d="M18 16H25L21.5 20Z" fill="#232629" />
            </svg>
          </Tool>
        </ToolBar>
        <Workspace>
          <LeftDock>
            <DockTitle>
              <svg width="16" height="16" viewBox="0 0 16 16">
                <rect x=".7" y="1" width="14.6" height="10.5" fill="#111" />
                <rect x="2" y="2.3" width="4" height="8" fill="#c06c7c" />
                <rect x="6" y="2.3" width="4" height="8" fill="#5fc27c" />
                <rect x="10" y="2.3" width="4" height="8" fill="#8575cf" />
                <path d="M6.5 11.5H9.5V13.5H12V15.5H4V13.5H6.5Z" fill="#222" />
              </svg>
              <DockName>Displays</DockName>
              <CloseBox><CloseGlyph /></CloseBox>
            </DockTitle>
            <TreeArea>
              <TreeFrame $w={369} $h={772} $col={240}>
                <Tree rows={displayRows} column={240} />
              </TreeFrame>
              <ScrollBar>
                <ScrollButton><Triangle dir="up" c="#a6a9ab" /></ScrollButton>
                <Thumb>
                  <svg width="5" height="8"><path d="M0 .5H5M0 3.5H5M0 6.5H5" stroke="#b4b6b9" /></svg>
                </Thumb>
                <Groove />
                <ScrollButton><Triangle dir="up" c="#a6a9ab" /></ScrollButton>
                <ScrollButton><Triangle dir="down" /></ScrollButton>
              </ScrollBar>
            </TreeArea>
            <SplitHandle><Grip $w={62} $h={2} $row /></SplitHandle>
            <ButtonRow>
              <PushButton $w={89}><Label text="&Add" /></PushButton>
              <PushButton $w={90} $off><Label text="D&uplicate" /></PushButton>
              <PushButton $w={89} $off><Label text="Re&move" /></PushButton>
              <PushButton $w={89} $off><Label text="Re&name" /></PushButton>
            </ButtonRow>
          </LeftDock>
          <Splitter>
            <Grip $w={2} $h={62} />
            <SplitArrow><Triangle dir="left" /></SplitArrow>
          </Splitter>
          <Viewport><Scene /></Viewport>
          <Splitter $flip>
            <Grip $w={2} $h={62} />
            <SplitArrow><Triangle dir="right" /></SplitArrow>
          </Splitter>
          <RightDock>
            <DockTitle>
              <svg width="16" height="16" viewBox="0 0 16 16" fill="#484b4e">
                <path d="M0 4.5L4 7V9.5L0 12Z" />
                <rect x="4" y="4.5" width="12" height="8" rx="2.5" />
              </svg>
              <DockName>Views</DockName>
              <CloseBox><CloseGlyph /></CloseBox>
            </DockTitle>
            <TypeRow>
              <TypeLabel>Type:</TypeLabel>
              <Combo>
                FPS (rviz)
                <Triangle dir="down" c="#2f93c8" />
              </Combo>
              <PushButton $w={78}><Label text="&Zero" /></PushButton>
            </TypeRow>
            <TreeFrame $w={361} $h={739} $col={198}>
              <Tree rows={viewRows} column={198} />
            </TreeFrame>
            <ButtonRow>
              <PushButton $w={113}><Label text="&Save" /></PushButton>
              <PushButton $w={113}><Label text="Rem&ove" /></PushButton>
              <PushButton $w={113}><Label text="R&ename" /></PushButton>
            </ButtonRow>
          </RightDock>
        </Workspace>
        <StatusBar>
          <PushButton $w={46}><Label text="&Reset" /></PushButton>
          <Fps>30 fps</Fps>
        </StatusBar>
      </Body>
    </Window>
  );
}
